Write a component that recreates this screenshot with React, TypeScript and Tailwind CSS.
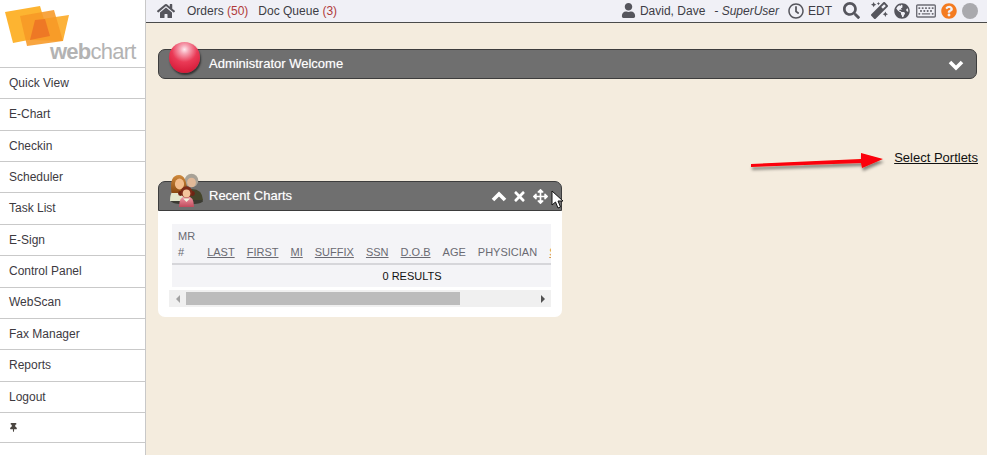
import React from "react";
import {
  FaHome,
  FaUser,
  FaRegClock,
  FaSearch,
  FaMagic,
  FaGlobeAmericas,
  FaRegKeyboard,
  FaQuestionCircle,
  FaTimes,
  FaArrowsAlt,
  FaThumbtack,
} from "react-icons/fa";

const navItems = [
  "Quick View",
  "E-Chart",
  "Checkin",
  "Scheduler",
  "Task List",
  "E-Sign",
  "Control Panel",
  "WebScan",
  "Fax Manager",
  "Reports",
  "Logout",
];

const columns = [
  { label: "LAST", link: true },
  { label: "FIRST", link: true },
  { label: "MI", link: true },
  { label: "SUFFIX", link: true },
  { label: "SSN", link: true },
  { label: "D.O.B", link: true },
  { label: "AGE", link: false },
  { label: "PHYSICIAN", link: false },
];

function Logo() {
  return (
    <div className="relative h-[67px] shrink-0 overflow-hidden">
      <svg width="145" height="67" viewBox="0 0 145 67" className="absolute left-0 top-0">
        <polygon points="5,12 40,6 49,36 13,43" fill="#fdb431" />
        <polygon points="35,20 69,15 63,41 30,40" fill="#fcb23a" />
        <polygon points="20,16 54,10 63,41 27,46" fill="#f79825" opacity="0.88" />
        <polygon points="35,20 45,19 50,36 30,40" fill="#ee7825" />
      </svg>
      <span className="absolute left-[50px] top-[38px] text-[22px] leading-[28px] tracking-[-0.75px] text-[#b3b3b3]">
        <span className="font-bold">web</span>chart
      </span>
    </div>
  );
}

function Sidebar() {
  return (
    <aside className="flex h-full w-[146px] shrink-0 flex-col border-r border-[#c8c8c8] bg-white">
      <Logo />
      {navItems.map((item) => (
        <div
          key={item}
          className="flex h-[31.36px] shrink-0 items-center border-t-[1.5px] border-[#c9c9c9] pb-[0.5px] pl-[9px] text-[12px] text-[#3d3a3f]"
        >
          {item}
        </div>
      ))}
      <div className="flex h-[31.36px] shrink-0 items-center border-y-[1.5px] border-[#c9c9c9] pl-[9px] text-[#4a4540]">
        <FaThumbtack size={9} />
      </div>
    </aside>
  );
}

function TopBar() {
  return (
    <header className="flex h-[23px] shrink-0 items-center border-b-[1.5px] border-[#4a4a4a] bg-[#f0f0f6] pb-[1px] pl-[11px] pr-[9px] text-[12px] text-[#3d3d45]">
      <FaHome size={18} className="text-[#55555c]" />
      <span className="ml-[12px]">
        Orders <span className="text-[#b03a3a]">(50)</span>
      </span>
      <span className="ml-[10px]">
        Doc Queue <span className="text-[#b03a3a]">(3)</span>
      </span>
      <div className="ml-auto flex items-center">
        <FaUser size={15} className="text-[#55555c]" />
        <span className="ml-[4px]">David, Dave</span>
        <span className="ml-[9px] italic">- SuperUser</span>
        <FaRegClock size={16} className="ml-[9px] text-[#55555c]" />
        <span className="ml-[4px]">EDT</span>
        <FaSearch size={17} className="ml-[11px] text-[#55555c]" />
        <FaMagic size={17} className="ml-[11px] text-[#55555c]" />
        <FaGlobeAmericas size={16} className="ml-[6px] text-[#55555c]" />
        <FaRegKeyboard size={20} className="ml-[6px] text-[#6d6d75]" />
        <FaQuestionCircle size={16} className="ml-[5px] text-[#f47b20]" />
        <span className="ml-[5px] h-[16px] w-[16px] rounded-full bg-[#a9a9ad]" />
      </div>
    </header>
  );
}

function Chevron({ up }: { up?: boolean }) {
  return (
    <svg width="16" height="11" viewBox="0 0 16 11">
      <polyline
        points={up ? "2,9 8,3 14,9" : "2,2 8,8 14,2"}
        fill="none"
        stroke="#fff"
        strokeWidth="3.6"
      />
    </svg>
  );
}

function RedBall() {
  return (
    <span className="absolute left-[10px] top-[-8px] h-[31px] w-[31px] rounded-full bg-[radial-gradient(circle_at_50%_24%,#ffe9ee_0%,#f6a3b3_16%,#ea3a56_45%,#d81f3c_78%,#b0142a_100%)] shadow-[1px_2px_2px_rgba(0,0,0,0.55)]" />
  );
}

function WelcomePortlet() {
  return (
    <div className="relative flex h-[30px] items-center rounded-[7px] border border-[#3d3d3d] bg-[#6f6f6f] text-[13px] text-white [text-shadow:0_0_1px_rgba(255,255,255,0.5)]">
      <RedBall />
      <span className="ml-[50px]">Administrator Welcome</span>
      <span className="ml-auto mr-[12px] mt-[3px] flex">
        <Chevron />
      </span>
    </div>
  );
}

function FamilyIcon() {
  return (
    <svg width="36" height="36" viewBox="0 0 36 36" className="absolute left-[10px] top-[-10px]">
      <defs>
        <linearGradient id="womanHair" x1="0" y1="0" x2="0" y2="1">
          <stop offset="0" stopColor="#d08a3c" />
          <stop offset="1" stopColor="#8a4a12" />
        </linearGradient>
        <linearGradient id="childBody" x1="0" y1="0" x2="0" y2="1">
          <stop offset="0" stopColor="#f4a0ac" />
          <stop offset="1" stopColor="#c04a5c" />
        </linearGradient>
      </defs>
      <ellipse cx="18" cy="29" rx="16" ry="3.5" fill="#2a2a1e" opacity="0.75" />
      <path d="M14 28 q1 -11 9 -11 q10 0 11 11z" fill="#45452a" />
      <circle cx="22.5" cy="8.5" r="6.8" fill="#a8a297" />
      <ellipse cx="22.5" cy="10.5" rx="4.4" ry="4.8" fill="#e0b898" />
      <path d="M1 29 q0 -12 8 -12 q8 0 9 12z" fill="#e3e6cc" />
      <path d="M2.5 21 q-2.5 -18 7.5 -18 q8 0 8 18z" fill="url(#womanHair)" />
      <ellipse cx="10.5" cy="12" rx="4.6" ry="5.4" fill="#f3bd8c" />
      <path d="M10 35 q0 -11 7.5 -11 q7.5 0 7.5 11z" fill="url(#childBody)" />
      <circle cx="11.5" cy="21.5" r="2.4" fill="#6e2414" />
      <circle cx="23.5" cy="21.5" r="2.4" fill="#6e2414" />
      <circle cx="17.5" cy="20" r="5.8" fill="#7e2c18" />
      <ellipse cx="17.5" cy="21.5" rx="3.8" ry="4" fill="#f4c49c" />
      <path d="M14 26.5 l3.5 3.5 l3.5 -3.5z" fill="#eef2dc" />
    </svg>
  );
}

function Cursor() {
  return (
    <svg width="13" height="20" viewBox="0 0 13 20" className="absolute right-[-3px] top-[8px]">
      <path
        d="M1 1 L1 15 L4.5 12 L7 18 L9.5 17 L7 11 L12 11 Z"
        fill="#fff"
        stroke="#111"
        strokeWidth="1"
        strokeLinejoin="round"
      />
    </svg>
  );
}

function RecentCharts() {
  return (
    <div className="flex h-[136px] w-[404px] flex-col rounded-[7px] bg-white">
      <div className="relative flex h-[30px] shrink-0 items-center rounded-t-[7px] border border-[#3d3d3d] bg-[#6f6f6f] text-[13px] text-white">
        <FamilyIcon />
        <span className="ml-[50px] [text-shadow:0_0_1px_rgba(255,255,255,0.5)]">Recent Charts</span>
        <div className="ml-auto mr-[13px] mt-[1px] flex items-center gap-[6px]">
          <span className="mr-[-1px] flex">
            <Chevron up />
          </span>
          <FaTimes size={15} />
          <FaArrowsAlt size={15} />
        </div>
        <Cursor />
      </div>
      <div className="ml-[14px] mr-[11px] mt-[13px] h-[63px] overflow-hidden bg-[#f4f4f7]">
        <table className="w-[480px] border-collapse text-[11px] text-[#6a6a72]">
          <thead>
            <tr className="h-[40px] border-b-2 border-[#d6d6da]">
              <th className="px-[6.03px] pb-[3px] text-left align-bottom font-normal leading-[16px]">
                MR
                <br />#
              </th>
              {columns.map((col) => (
                <th key={col.label} className="px-[6.03px] pb-[3px] text-left align-bottom font-normal leading-[16px]">
                  <span className={col.link ? "underline" : ""}>{col.label}</span>
                </th>
              ))}
              <th className="w-full px-[6.03px] pb-[3px] text-left align-bottom font-normal leading-[16px] text-[#d99a4a]">
                <span className="underline">STATUS</span>
              </th>
            </tr>
          </thead>
          <tbody>
            <tr className="h-[23px]">
              <td colSpan={10} className="text-center text-[#111]">
                0 RESULTS
              </td>
            </tr>
          </tbody>
        </table>
      </div>
      <div className="ml-[11px] mr-[11px] mt-[3px] flex h-[17px] items-center bg-[#f0f0f0]">
        <span className="flex w-[17px] shrink-0 justify-center">
          <span className="h-0 w-0 border-y-[4px] border-r-[4px] border-y-transparent border-r-[#a3a3a3]" />
        </span>
        <span className="h-[13px] w-[274px] bg-[#bcbcbc]" />
        <span className="ml-auto flex w-[17px] shrink-0 justify-center">
          <span className="h-0 w-0 border-y-[4px] border-l-[4px] border-y-transparent border-l-[#505050]" />
        </span>
      </div>
    </div>
  );
}

function RedArrow() {
  return (
    <svg width="135" height="24" viewBox="0 0 135 24" className="absolute right-[92px] top-[-2px] overflow-visible">
      <defs>
        <filter id="arrowShadow" x="-10%" y="-50%" width="120%" height="220%">
          <feDropShadow dx="1" dy="3" stdDeviation="1.4" floodColor="#000" floodOpacity="0.45" />
        </filter>
      </defs>
      <path d="M1 16 L111 11 L111 5 L133 11 L112 20 L111 15 L1 19 Z" fill="#fb0007" filter="url(#arrowShadow)" />
    </svg>
  );
}

export default function App() {
  return (
    <div className="flex h-[455px] w-[987px] overflow-hidden bg-[#f4ecde] text-[12px] [font-family:'Liberation_Sans',Arial,sans-serif]">
      <Sidebar />
      <main className="flex min-w-0 flex-1 flex-col">
        <TopBar />
        <div className="pl-[12px] pr-[10px] pt-[26px]">
          <WelcomePortlet />
          <div className="relative mt-[71px] flex justify-end">
            <RedArrow />
            <a className="mr-[-1px] text-[13px] leading-[16px] text-[#111] underline">Select Portlets</a>
          </div>
          <div className="mt-[15px]">
            <RecentCharts />
          </div>
        </div>
      </main>
    </div>
  );
}
